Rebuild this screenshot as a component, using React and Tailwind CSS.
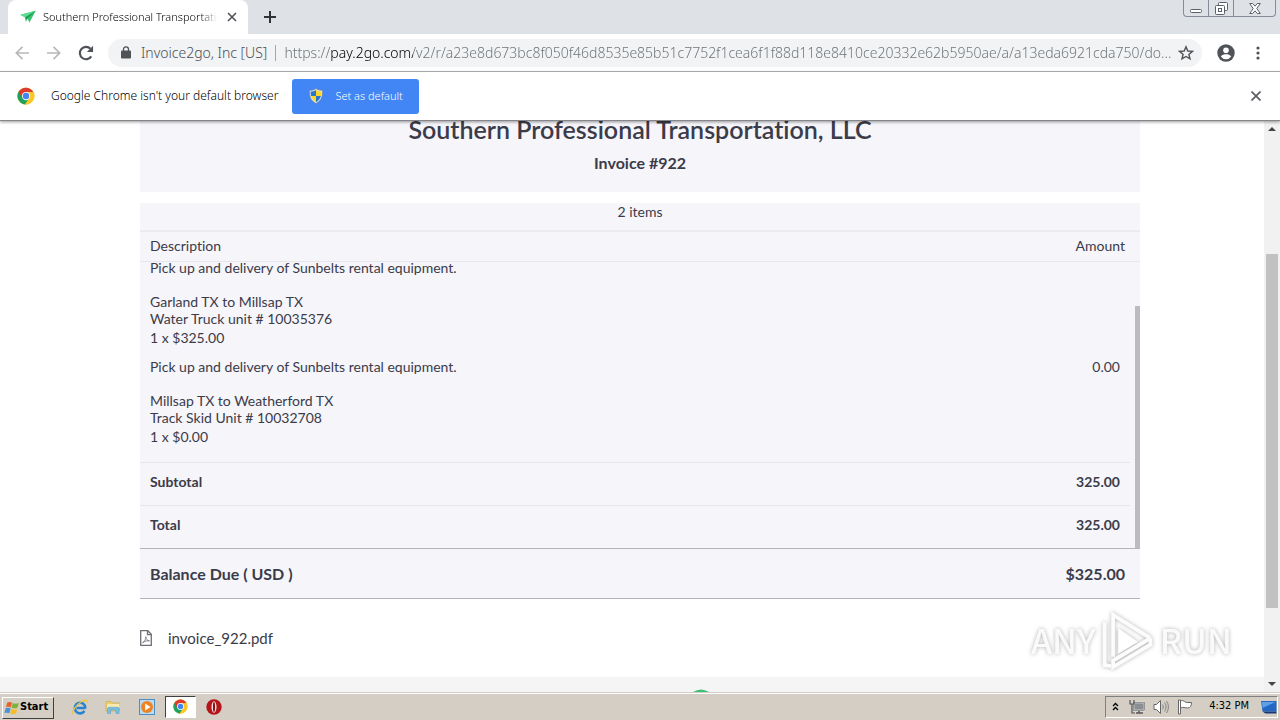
import React from "react";

const items = [
  {
    lines: ["Pick up and delivery of Sunbelts rental equipment.", "", "Garland TX to Millsap TX", "Water Truck unit # 10035376"],
    qty: "1 x $325.00",
    amount: "",
    pad: "pb-[9px]",
  },
  {
    lines: ["Pick up and delivery of Sunbelts rental equipment.", "", "Millsap TX to Weatherford TX", "Track Skid Unit # 10032708"],
    qty: "1 x $0.00",
    amount: "0.00",
    pad: "pb-3.5",
  },
];

function ChromeLogo({ className }) {
  return (
    <svg viewBox="0 0 48 48" className={className} aria-hidden="true">
      <circle cx="24" cy="24" r="23" fill="#fbc828" />
      <path d="M24 24 4.1 12.5A23 23 0 0 0 21 46.8L33 29Z" fill="#1fa35c" />
      <path d="M24 24 34 13.5h9.4A23 23 0 0 0 4.1 12.5L14 29.5Z" fill="#de3b30" />
      <path d="M24 13.5h19.4A23 23 0 0 1 22 46.9L33.5 29Z" fill="#fbc828" />
      <circle cx="24" cy="24" r="11" fill="#fff" />
      <circle cx="24" cy="24" r="8.6" fill="#4285f4" />
    </svg>
  );
}

function Shield() {
  return (
    <svg viewBox="0 0 16 16" className="size-4" aria-hidden="true">
      <path d="M8 .5C6 2 4 2.3 1.500 2.300c-.3 6 1 10.500 6.500 13.200 5.500-2.700 6.800-7.200 6.500-13.200C12 2.300 10 2 8 .5Z" fill="#dfe6ee" stroke="#6c7c90" strokeWidth=".6" />
      <path d="M8 1.900C6.300 3 4.600 3.400 2.700 3.500 2.600 5.200 2.700 6.700 3.100 8H8Z" fill="#2b76c9" />
      <path d="M8 1.900c1.700 1.100 3.400 1.500 5.300 1.600.1 1.700 0 3.200-.4 4.500H8Z" fill="#fbd62c" />
      <path d="M3.100 8c.8 2.800 2.300 4.800 4.900 6.200V8Z" fill="#fbd62c" />
      <path d="M12.900 8c-.8 2.800-2.300 4.800-4.900 6.200V8Z" fill="#2b76c9" />
    </svg>
  );
}

function TabStrip() {
  return (
    <header className="flex h-[34px] items-start justify-between bg-[#dee1e6]">
      <div className="flex h-full items-center">
        <div className="ml-2 flex h-full w-60 items-center rounded-t-lg bg-white pl-3 pr-1.5">
          <svg viewBox="0 0 16 14" className="h-[14px] w-4 shrink-0" aria-hidden="true">
            <path d="M.5 4.800 15.700.8 9.500 12.500 7.200 8.500Z" fill="#35c46f" />
            <path d="M.5 4.800 15.700.8 5 7.600Z" fill="#5fdc92" />
            <path d="M5 7.600 15.700.8 6.900 9 6 12Z" fill="#1b9a50" />
          </svg>
          <span className="ml-[7px] flex-1 overflow-hidden whitespace-nowrap text-[11px] font-light text-black [mask-image:linear-gradient(90deg,#000_90%,transparent)]">
            Southern Professional Transportation
          </span>
          <button type="button" aria-label="Close tab" className="ml-1 flex size-5 items-center justify-center">
            <svg viewBox="0 0 10 10" className="size-2.5" stroke="#4f5358" strokeWidth="1.600">
              <path d="M1 1l8 8M9 1 1 9" />
            </svg>
          </button>
        </div>
        <button type="button" aria-label="New tab" className="ml-3 flex size-5 items-center justify-center">
          <svg viewBox="0 0 12 12" className="size-3" stroke="#2f3237" strokeWidth="2">
            <path d="M6 0v12M0 6h12" />
          </svg>
        </button>
      </div>
      <div className="mr-1 flex h-[17px] rounded-b border border-t-0 border-[#868c99] text-[#5b6069]">
        <button type="button" aria-label="Minimize" className="flex w-[25px] items-center justify-center border-r border-[#868c99]">
          <svg viewBox="0 0 12 12" className="size-3" fill="#fff" stroke="currentColor">
            <rect x=".5" y="7.500" width="11" height="3" rx="1" />
          </svg>
        </button>
        <button type="button" aria-label="Restore" className="flex w-[25px] items-center justify-center border-r border-[#868c99]">
          <svg viewBox="0 0 13 13" className="size-[13px]" fill="#fff" stroke="currentColor">
            <rect x="3.500" y=".5" width="9" height="8" rx="1" />
            <rect x=".5" y="3.500" width="9" height="9" rx="1" />
            <rect x="3.500" y="6.500" width="3" height="3" />
          </svg>
        </button>
        <button type="button" aria-label="Close" className="flex w-[41px] items-center justify-center">
          <svg viewBox="0 0 12 11" className="h-[11px] w-3" fill="#fff" stroke="currentColor">
            <path d="M.7.500h3L6 3.200 8.300.500h3L7.800 5.500l3.500 5h-3L6 7.800 3.700 10.500h-3l3.500-5Z" />
          </svg>
        </button>
      </div>
    </header>
  );
}

function Toolbar() {
  return (
    <nav className="flex h-[38px] items-center border-b border-[#b0b2b5] bg-white pl-3 pr-3">
      <button type="button" aria-label="Back" className="flex size-5 items-center justify-center">
        <svg viewBox="0 0 14 14" className="size-3.5" fill="none" stroke="#b6b8ba" strokeWidth="1.700">
          <path d="M14 7H1.500M7.500.8 1.300 7l6.200 6.200" />
        </svg>
      </button>
      <button type="button" aria-label="Forward" className="ml-3 flex size-5 items-center justify-center">
        <svg viewBox="0 0 14 14" className="size-3.5" fill="none" stroke="#b6b8ba" strokeWidth="1.700">
          <path d="M0 7h12.500M6.500.8 12.700 7l-6.200 6.200" />
        </svg>
      </button>
      <button type="button" aria-label="Reload" className="ml-3 flex size-5 items-center justify-center">
        <svg viewBox="0 0 16 16" className="size-[18px]" aria-hidden="true">
          <path d="M12.700 11A5.500 5.500 0 1 1 12 4.200" fill="none" stroke="#4f5358" strokeWidth="1.900" />
          <path d="M14.300 1.500V7H8.800Z" fill="#4f5358" />
        </svg>
      </button>
      <div className="ml-3 flex h-7 min-w-0 flex-1 items-center rounded-full bg-[#f1f3f4] pl-[13px] pr-1.5 text-[14px] font-light text-[#4a4e53]">
        <svg viewBox="0 0 10 13" className="h-[13px] w-2.5 shrink-0" aria-hidden="true">
          <rect x="0" y="4.500" width="10" height="8" rx="1" fill="#4f5358" />
          <path d="M2.500 5V3.300a2.500 2.500 0 0 1 5 0V5" fill="none" stroke="#4f5358" strokeWidth="1.300" />
        </svg>
        <button type="button" className="ml-2.5 shrink-0 whitespace-nowrap">Invoice2go, Inc [US]</button>
        <span className="mx-2 h-4 w-px shrink-0 bg-[#a4a8ac]" />
        <input
          type="text"
          aria-label="Address"
          defaultValue="https://pay.2go.com/v2/r/a23e8d673bc8f050f46d8535e85b51c7752f1cea6f1f88d118e8410ce20332e62b5950ae/a/a13eda6921cda750/do..."
          className="min-w-0 flex-1 bg-[linear-gradient(90deg,#6b7075_46px,#000_46px,#000_129px,#6b7075_129px)] bg-clip-text text-transparent outline-none"
        />
        <button type="button" aria-label="Bookmark" className="ml-1 flex size-5 shrink-0 items-center justify-center">
          <svg viewBox="0 0 16 16" className="size-4" fill="none" stroke="#4f5358" strokeWidth="1.400">
            <path d="m8 1.800 1.800 4.200 4.600.4-3.500 3 1.100 4.500L8 11.500l-4 2.400 1.100-4.500-3.500-3 4.600-.4Z" />
          </svg>
        </button>
      </div>
      <button type="button" aria-label="Profile" className="ml-3.5 flex size-5 items-center justify-center">
        <svg viewBox="0 0 18 18" className="size-[18px]">
          <circle cx="9" cy="9" r="8.700" fill="#4f5358" />
          <circle cx="9" cy="6.300" r="2.800" fill="#fff" />
          <path d="M3.800 12.600c1-1.800 3.200-2.400 5.200-2.400s4.200.6 5.200 2.400A6.400 6.400 0 0 1 9 15.300a6.400 6.400 0 0 1-5.200-2.700Z" fill="#fff" />
        </svg>
      </button>
      <button type="button" aria-label="Menu" className="ml-3 flex size-5 items-center justify-center">
        <svg viewBox="0 0 4 14" className="h-3.5 w-1" fill="#4f5358">
          <circle cx="2" cy="2" r="1.600" />
          <circle cx="2" cy="7" r="1.600" />
          <circle cx="2" cy="12" r="1.600" />
        </svg>
      </button>
    </nav>
  );
}

function InfoBar() {
  return (
    <div className="relative z-10 flex h-[49px] items-center border-b border-[#85858a] bg-white pl-[17px] pr-3.5 shadow-[0_1px_3px_rgba(0,0,0,0.4)]">
      <ChromeLogo className="size-[18px]" />
      <span className="ml-4 whitespace-nowrap text-[12px] font-light text-black">Google Chrome isn't your default browser</span>
      <button type="button" className="ml-3.5 flex h-[35px] w-[127px] items-center rounded-[3px] bg-[#4285f4] pl-4 text-[11px] font-light text-white">
        <Shield />
        <span className="ml-[11px] whitespace-nowrap">Set as default</span>
      </button>
      <button type="button" aria-label="Dismiss" className="ml-auto flex size-5 items-center justify-center">
        <svg viewBox="0 0 10 10" className="size-2.5" stroke="#5a5d61" strokeWidth="1.700">
          <path d="M.5.500l9 9M9.500.500l-9 9" />
        </svg>
      </button>
    </div>
  );
}

function Invoice() {
  return (
    <div className="mx-auto w-full max-w-[1000px] text-[14px] text-[#3b3b49] [font-variant-ligatures:none]">
      <div className="bg-[#f5f5fa] pb-[17px] text-center font-bold">
        <h1 className="text-[25px] font-semibold leading-4">Southern Professional Transportation, LLC</h1>
        <h2 className="mt-3.5 text-[16px] leading-6">Invoice #922</h2>
      </div>
      <div className="mt-[11px] h-[29px] border-b-2 border-[#ebebf0] bg-[#f5f5fa] text-center leading-[18px]">2 items</div>
      <table className="w-full bg-[#f5f5fa]">
        <thead>
          <tr className="h-[29px] border-b border-[#e6e6ec] leading-[18px]">
            <th className="pl-2.5 text-left font-normal">Description</th>
            <th className="pr-[15px] text-right font-normal">Amount</th>
          </tr>
        </thead>
      </table>
      <div className="flex bg-[#f5f5fa]">
        <table className="-mt-[3px] mr-[5px] flex-1">
          <tbody>
            {items.map((item) => (
              <tr key={item.qty} className="align-top leading-[17px]">
                <td className={"pl-2.5 " + item.pad}>
                  {item.lines.map((line, i) => (
                    <p key={i} className="min-h-[17px]">{line}</p>
                  ))}
                  <p className="leading-[22px]">{item.qty}</p>
                </td>
                <td className="pr-2.5 text-right">{item.amount}</td>
              </tr>
            ))}
            {["Subtotal", "Total"].map((name) => (
              <tr key={name} className="h-[43px] border-t border-[#e6e6ec] align-top font-bold">
                <th className="pl-2.5 pt-2 text-left">{name}</th>
                <td className="pr-2.5 pt-2 text-right">325.00</td>
              </tr>
            ))}
          </tbody>
        </table>
        <div className="mt-11 w-[5px] bg-[#bcbcc0]" />
      </div>
      <div className="flex h-[51px] items-center justify-between border-y border-[#b4b4b8] bg-[#f5f5fa] pl-2.5 pr-[15px] text-[16px] font-bold">
        <span>Balance Due ( USD )</span>
        <span>$325.00</span>
      </div>
      <a href="#invoice" className="mt-[27px] flex items-center gap-4 text-[15px] leading-6">
        <svg viewBox="0 0 12 16" className="h-4 w-3" fill="none" stroke="#6e6e76" strokeWidth="1.300" aria-hidden="true">
          <path d="M.7.700h7.100l3.500 3.600v11H.7ZM7.500.700v4h3.800" />
          <path d="M2.500 12.800c2.500-1.300 3.400-4 3.300-6.200.3 2.500 1.300 4 3.700 4.300-2.500-.4-4.500.2-7 1.900Z" strokeWidth=".8" />
        </svg>
        invoice_922.pdf
      </a>
    </div>
  );
}

function Watermark() {
  return (
    <div className="pointer-events-none absolute bottom-[22px] right-8 flex items-center font-['Noto_Sans_CJK_SC',sans-serif] text-[34px] font-medium leading-none text-[#fafafa] drop-shadow-[0_0_2px_rgba(0,0,0,0.3)]">
      <span>ANY</span>
      <svg viewBox="0 0 60 64" className="mx-1 h-[60px] w-14" fill="none" stroke="#fcfcfc" strokeWidth="4" aria-hidden="true">
        <path d="M14 50V5L54 30" />
        <path d="M5 13v46l7 1" />
        <path d="M54 30v7L14 61V54L54 30" />
        <path d="M20 20v26l20-12Z" fill="#fff" strokeWidth="1" />
      </svg>
      <span>RUN</span>
    </div>
  );
}

function PageScrollbar() {
  return (
    <div className="flex w-4 flex-col items-center bg-[#f1f1f1]">
      <svg viewBox="0 0 16 16" className="size-4" aria-hidden="true"><path d="M4 10h8L8 6Z" fill="#454545" /></svg>
      <div className="mt-[117px] w-3 flex-1 bg-[#c1c1c1]" />
      <svg viewBox="0 0 16 16" className="mt-[68px] size-4" aria-hidden="true"><path d="M4 6h8l-4 4Z" fill="#454545" /></svg>
    </div>
  );
}

function Taskbar() {
  return (
    <footer className="flex h-7 items-center border-t border-[#d0ccc4] bg-[#d5cec4] shadow-[inset_0_1px_0_#fff]">
      <button type="button" className="ml-0.5 mt-0.5 flex h-[22px] w-[52px] items-center border border-b-[#404040] border-l-white border-r-[#404040] border-t-white pl-px font-['DejaVu_Sans_Condensed','DejaVu_Sans',sans-serif] text-[11px] font-bold text-black">
        <svg viewBox="0 0 16 16" className="size-4 shrink-0" aria-hidden="true">
          <path d="M3.200 2.500C5 1.600 6.600 1.800 8 2.700L6.800 7.500C5.400 6.700 3.900 6.700 2 7.300Z" fill="#e8622c" />
          <path d="M8.800 3c1.800.9 3.800.9 6 .1l-1.300 4.700c-2 .7-4 .7-5.900 0Z" fill="#7bb33b" />
          <path d="M1.700 8.300c1.800-.7 3.400-.6 4.900.2l-1.300 4.800c-1.400-.8-3-.9-4.900-.2Z" fill="#4a93d6" />
          <path d="M7.400 8.800c1.800.8 3.700.8 5.800.1L12 13.500c-2 .8-4 .8-5.900 0Z" fill="#f6bd2b" />
        </svg>
        Start
      </button>
      <div className="ml-[17px] flex items-center">
        <button type="button" aria-label="Internet Explorer" className="flex size-[18px] items-center justify-center">
          <svg viewBox="0 0 16 16" className="size-4">
            <path d="M13.500 9H4.600M13.400 9.200A5.300 5.300 0 1 0 12.500 12" fill="none" stroke="#2585d3" strokeWidth="2.600" />
            <path d="M1.200 15C-.7 12.500 4 6.200 9 3c3.300-2.300 6.300-2.500 5.800.3" fill="none" stroke="#f0c63a" strokeWidth="1.300" />
          </svg>
        </button>
        <button type="button" aria-label="Explorer" className="ml-[15px] flex size-[18px] items-center justify-center">
          <svg viewBox="0 0 16 16" className="size-4">
            <path d="M1 2.500h5l1 1.500h7.500v8H1Z" fill="#e9cf72" stroke="#cba94b" strokeWidth=".6" />
            <path d="M2 5h12.500v4H2Z" fill="#f7eab0" />
            <path d="M2.500 14.500V9.800c0-1 .5-1.500 1.500-1.500h8.500c1 0 1.500.5 1.500 1.500v4.700h-3V11H5.500v3.500Z" fill="#79bfe4" stroke="#4e98c4" strokeWidth=".5" />
          </svg>
        </button>
        <button type="button" aria-label="Media Player" className="ml-4 flex size-[18px] items-center justify-center">
          <svg viewBox="0 0 16 16" className="size-4">
            <rect x=".5" y=".5" width="15" height="15" fill="#b8dcf3" stroke="#4c8dc6" />
            <circle cx="8" cy="8" r="6" fill="#ef8222" />
            <path d="M6.200 4.600v6.800L11.500 8Z" fill="#fff" />
          </svg>
        </button>
        <button type="button" aria-label="Chrome" className="ml-[9px] flex h-[22px] w-[31px] items-center justify-center border border-b-white border-l-[#404040] border-r-white border-t-[#404040] bg-white">
          <ChromeLogo className="size-[15px]" />
        </button>
        <button type="button" aria-label="Opera" className="ml-[9px] flex size-[18px] items-center justify-center">
          <svg viewBox="0 0 16 16" className="size-4">
            <circle cx="8" cy="8" r="7.700" fill="#b3151b" />
            <ellipse cx="8" cy="8" rx="2.500" ry="5.800" fill="#f5eeee" />
            <ellipse cx="8" cy="8" rx="1.100" ry="5" fill="#8d1014" />
          </svg>
        </button>
      </div>
      <div className="ml-auto mr-0.5 flex h-[22px] items-center border border-b-white border-l-[#808080] border-r-white border-t-[#808080] pl-1.5 font-['DejaVu_Sans_Condensed','DejaVu_Sans',sans-serif] text-[11px] text-black">
        <svg viewBox="0 0 7 9" className="h-[9px] w-[7px]" fill="none" stroke="#000" strokeWidth="1.300" aria-hidden="true">
          <path d="m1 4 2.500-2.500L6 4M1 8l2.500-2.500L6 8" />
        </svg>
        <svg viewBox="0 0 16 16" className="ml-2.5 size-4" aria-hidden="true">
          <rect x="4.500" y="3.500" width="11" height="8" fill="#8b8f94" stroke="#f8f8f8" strokeWidth="1.500" />
          <rect x="4.500" y="3.500" width="11" height="8" fill="none" stroke="#555" strokeWidth=".6" />
          <path d="M7 14h7M10 12v2" stroke="#555" strokeWidth="1.500" />
          <path d="M1 1v4h4V1M3 5v9h3" fill="none" stroke="#555" strokeWidth="1.200" />
        </svg>
        <svg viewBox="0 0 16 16" className="ml-2 size-4" aria-hidden="true">
          <path d="M1 5.500h2.500L7.500 1.500v13l-4-4H1Z" fill="#fff" stroke="#666" />
          <path d="M9.500 5.500c1 1.500 1 3.500 0 5M11.500 3.500c2 2.500 2 6.500 0 9M13.500 2c2.500 3.500 2.500 8.500 0 12" fill="none" stroke="#777" strokeWidth=".9" />
        </svg>
        <svg viewBox="0 0 16 16" className="ml-2 size-4" aria-hidden="true">
          <path d="M3.500 2c3-1.500 4 1.500 6.500 1.500h4.500c0 3-1 5.500-4 5.500S6.500 7.500 3.500 9Z" fill="#fff" stroke="#666" />
          <path d="M1.500 1h2v14h-2Z" fill="#fff" stroke="#666" />
        </svg>
        <span className="ml-4 whitespace-nowrap">4:32 PM</span>
        <svg viewBox="0 0 16 14" className="ml-3 h-3.5 w-4" aria-hidden="true">
          <path d="M0 1h15.500v10.500H1.500Z" fill="#2468c4" />
          <path d="M1 2h13.500L1.500 8Z" fill="#5fa0e6" />
          <path d="M1.500 11.500h14v2h-11Z" fill="#163a75" />
        </svg>
      </div>
    </footer>
  );
}

export default function App() {
  return (
    <div className="flex h-screen flex-col overflow-hidden bg-white font-['Noto_Sans',sans-serif]">
      <TabStrip />
      <Toolbar />
      <InfoBar />
      <div className="flex min-h-0 flex-1">
        <main className="relative flex min-w-0 flex-1 flex-col font-[Lato,sans-serif]">
          <div className="pl-4">
            <Invoice />
          </div>
          <div className="mt-auto flex h-[15px] items-end justify-center bg-[#f5f5f5] pl-[138px]">
            <svg viewBox="0 0 16 3" className="h-[3px] w-4" aria-hidden="true"><path d="M0 3Q8-2 16 3Z" fill="#3cc274" /></svg>
          </div>
          <Watermark />
        </main>
        <PageScrollbar />
      </div>
      <Taskbar />
    </div>
  );
}
